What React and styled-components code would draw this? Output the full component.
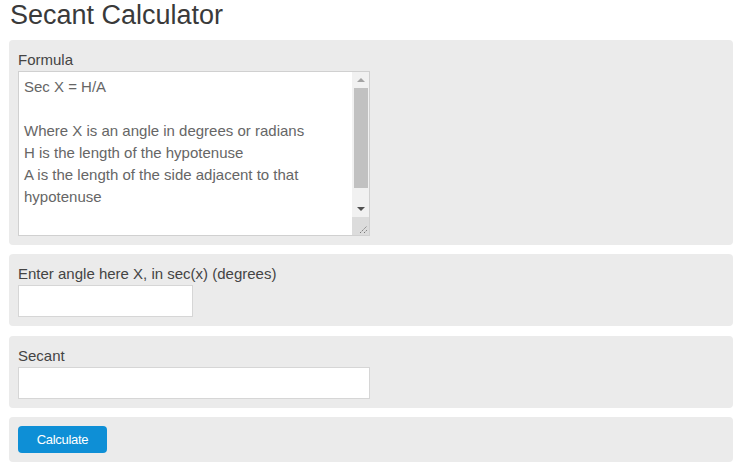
import React, { useState } from 'react';
import styled, { createGlobalStyle } from 'styled-components';

const GlobalStyle = createGlobalStyle`
  html, body {
    margin: 0;
    padding: 0;
    background: #fff;
    font-family: "Liberation Sans", Arial, sans-serif;
  }
`;

const Page = styled.div`
  padding: 0 13px 0 9px;
`;

const Title = styled.h1`
  margin: 0 0 10px 1px;
  font-size: 27px;
  line-height: 30px;
  font-weight: normal;
  color: #3a3a3a;
`;

const Panel = styled.div`
  background: #ebebeb;
  border-radius: 4px;
  padding: 9px;
  margin-bottom: ${(p) => p.$gap || 9}px;
`;

const Label = styled.label`
  display: block;
  font-size: 15px;
  line-height: 22px;
  color: #444;
`;

const TextareaWrap = styled.div`
  position: relative;
  width: 352px;
  height: 165px;
`;

const FormulaBox = styled.textarea`
  display: block;
  box-sizing: border-box;
  width: 100%;
  height: 100%;
  margin: 0;
  padding: 4px 22px 4px 5px;
  border: 1px solid #d0d0d0;
  background: #fff;
  font-family: "Liberation Sans", Arial, sans-serif;
  font-size: 15px;
  line-height: 22px;
  color: #666;
  resize: none;
  overflow: hidden;
  outline: none;
`;

/* scrollbar painted over the textarea's right edge */
const ScrollBar = styled.div`
  position: absolute;
  top: 1px;
  right: 1px;
  bottom: 1px;
  width: 17px;
  display: flex;
  flex-direction: column;
  background: #f1f1f1;
`;

const ArrowBtn = styled.div`
  height: ${(p) => p.$h}px;
  display: flex;
  align-items: center;
  justify-content: center;

  &::after {
    content: '';
    width: 0;
    height: 0;
    border-left: 4px solid transparent;
    border-right: 4px solid transparent;
    ${(p) => (p.$up ? 'border-bottom' : 'border-top')}: 4px solid ${(p) => p.$color};
  }
`;

const Track = styled.div`
  flex: 1;
  padding: 0 1px 0 2px;
`;

const Thumb = styled.div`
  height: 100px;
  background: #c1c1c1;
`;

const Grip = styled.div`
  height: 18px;
  background: #dcdcdc;
  display: flex;
  align-items: flex-end;
  justify-content: flex-end;
`;

const Field = styled.input`
  display: block;
  box-sizing: border-box;
  width: ${(p) => p.$width}px;
  height: 32px;
  margin: 0;
  padding: 4px 6px;
  border: 1px solid #d6d6d6;
  background: #fff;
  font-family: "Liberation Sans", Arial, sans-serif;
  font-size: 15px;
  color: #444;
  outline: none;
`;

const CalcButton = styled.button`
  display: block;
  width: 89px;
  height: 27px;
  padding: 0;
  border: none;
  border-radius: 4px;
  background: #0e8fd6;
  color: #fff;
  font-family: "Liberation Sans", Arial, sans-serif;
  font-size: 13px;
  letter-spacing: -0.3px;
  cursor: pointer;
`;

const formula = `Sec X = H/A

Where X is an angle in degrees or radians
H is the length of the hypotenuse
A is the length of the side adjacent to that hypotenuse`;

export default function App() {
  const [angle, setAngle] = useState('');
  const [result, setResult] = useState('');

  const calculate = () => {
    const x = parseFloat(angle);
    if (isNaN(x)) return;
    setResult(String(1 / Math.cos((x * Math.PI) / 180)));
  };

  return (
    <Page>
      <GlobalStyle />
      <Title>Secant Calculator</Title>
      <Panel>
        <Label>Formula</Label>
        <TextareaWrap>
          <FormulaBox defaultValue={formula} readOnly />
          <ScrollBar>
            <ArrowBtn $h={16} $up $color="#a3a3a3" />
            <Track>
              <Thumb />
            </Track>
            <ArrowBtn $h={17} $color="#505050" />
            <Grip>
              <svg width="12" height="12" viewBox="0 0 12 12">
                <path d="M3 10 L10 3 M7 10 L10 7" stroke="#777" strokeWidth="1" strokeDasharray="1.5 1" />
              </svg>
            </Grip>
          </ScrollBar>
        </TextareaWrap>
      </Panel>
      <Panel $gap={10}>
        <Label>Enter angle here X, in sec(x) (degrees)</Label>
        <Field $width={175} value={angle} onChange={(e) => setAngle(e.target.value)} />
      </Panel>
      <Panel>
        <Label>Secant</Label>
        <Field $width={352} value={result} readOnly />
      </Panel>
      <Panel>
        <CalcButton onClick={calculate}>Calculate</CalcButton>
      </Panel>
    </Page>
  );
}
